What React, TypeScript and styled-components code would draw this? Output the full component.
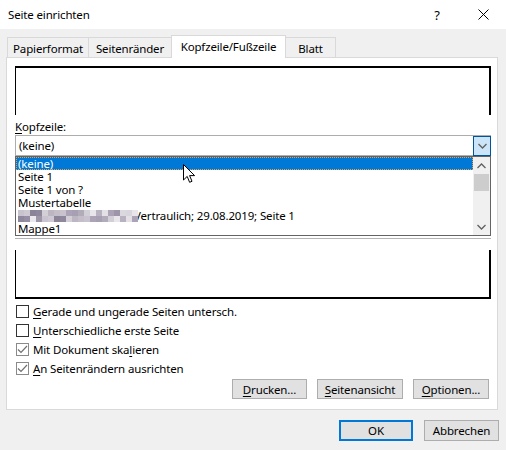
import React from "react";
import styled, { createGlobalStyle, css } from "styled-components";

const GlobalStyle = createGlobalStyle`
  html, body {
    margin: 0;
    padding: 0;
    background: #f0f0f0;
  }
  body {
    font-family: "Noto Sans", "Segoe UI", sans-serif;
    font-size: 11.5px;
    letter-spacing: -0.15px;
    color: #000;
  }
  * {
    box-sizing: border-box;
  }
`;

const Window = styled.div`
  width: 506px;
  height: 450px;
  display: flex;
  flex-direction: column;
  background: #f0f0f0;
  overflow: hidden;
`;

const TitleBar = styled.div`
  height: 29px;
  background: #fff;
  display: flex;
  align-items: center;
  padding-left: 8px;
`;

const Title = styled.span`
  flex: 1;
`;

const TitleButton = styled.div`
  width: 46px;
  height: 29px;
  display: flex;
  align-items: center;
  justify-content: center;
  font-size: 13px;
  color: #000;
`;

const Body = styled.div`
  flex: 1;
  display: flex;
  flex-direction: column;
  padding: 7px 8px 0 6px;
`;

const TabStrip = styled.div`
  display: flex;
  align-items: flex-end;
  height: 21px;
  padding-left: 2px;
  position: relative;
  z-index: 1;
`;

const Tab = styled.div<{ $active?: boolean; $width: number }>`
  width: ${(p) => p.$width}px;
  height: 20px;
  display: flex;
  align-items: center;
  justify-content: center;
  border: 1px solid #d9d9d9;
  border-bottom: none;
  background: #f0f0f0;
  margin-left: -1px;
  padding-top: 1px;
  ${(p) =>
    p.$active &&
    css`
      height: 23px;
      background: #fff;
      margin-bottom: -1px;
      padding-top: 0;
      padding-bottom: 1px;
      position: relative;
      z-index: 2;
    `}
`;

const Panel = styled.div`
  background: #fff;
  border: 1px solid #d9d9d9;
  height: 353px;
  padding: 0 6px 0 8px;
  display: flex;
  flex-direction: column;
`;

const PreviewBox = styled.div<{ $footer?: boolean }>`
  height: 49px;
  border-left: 1px solid #000;
  border-right: 2px solid #000;
  ${(p) =>
    p.$footer
      ? css`
          margin-top: 14px;
          border-bottom: 2px solid #000;
        `
      : css`
          margin-top: 8px;
          border-top: 2px solid #000;
        `}
`;

const FieldLabel = styled.div`
  margin-top: 4px;
  height: 16px;
  line-height: 16px;
`;

const AccessKey = styled.span`
  text-decoration: underline;
  text-underline-offset: 2px;
`;

const ComboWrap = styled.div`
  position: relative;
`;

const Combo = styled.div`
  height: 21px;
  border: 1px solid #adadad;
  display: flex;
  align-items: center;
  padding-left: 3px;
  position: relative;
`;

const ComboButton = styled.div`
  position: absolute;
  right: -1px;
  top: 0;
  width: 18px;
  height: 20px;
  background: #cce4f7;
  border: 1px solid #005499;
  display: flex;
  align-items: center;
  justify-content: center;
`;

const ListBox = styled.div`
  height: 80px;
  border: 1px solid #646464;
  display: flex;
  box-shadow: 0 2px 0 #fff, 0 3px 0 #b4b4b4;
`;

const ListItems = styled.div`
  flex: 1;
  display: flex;
  flex-direction: column;
  overflow: hidden;
`;

const ListRow = styled.div<{ $selected?: boolean }>`
  height: 13px;
  flex: none;
  line-height: 13px;
  padding-left: 2px;
  white-space: nowrap;
  display: flex;
  align-items: center;
  ${(p) =>
    p.$selected &&
    css`
      background: #0078d7;
      color: #fff;
      outline: 1px dotted #e8a040;
      outline-offset: -1px;
    `}
`;

const Mosaic = styled.span`
  display: inline-grid;
  grid-template-columns: repeat(20, 6px);
  grid-template-rows: 6px 6px;
  margin-right: -4px;
  position: relative;
  z-index: 1;
`;

const MosaicCell = styled.span<{ $c: string }>`
  background: ${(p) => p.$c};
`;

const ScrollBar = styled.div`
  width: 17px;
  background: #f0f0f0;
  display: flex;
  flex-direction: column;
`;

const ScrollArrow = styled.div`
  height: 17px;
  display: flex;
  align-items: center;
  justify-content: center;
`;

const ScrollTrack = styled.div`
  flex: 1;
  padding: 0 1px;
`;

const ScrollThumb = styled.div`
  height: 17px;
  background: #cdcdcd;
`;

const Cursor = styled.svg`
  position: absolute;
  left: 168px;
  top: 29px;
  z-index: 3;
`;

const Options = styled.div`
  margin-top: 3px;
  display: flex;
  flex-direction: column;
`;

const CheckRow = styled.label`
  height: 19px;
  display: flex;
  align-items: center;
  gap: 4px;
  padding-left: 1px;
`;

const CheckBox = styled.span<{ $checked?: boolean }>`
  width: 13px;
  height: 13px;
  border: 1px solid ${(p) => (p.$checked ? "#8a8a8a" : "#333")};
  background: #fff;
  display: flex;
  align-items: center;
  justify-content: center;
`;

const ButtonRow = styled.div<{ $gap: number }>`
  display: flex;
  justify-content: flex-end;
  gap: ${(p) => p.$gap}px;
`;

const PanelButtons = styled(ButtonRow)`
  margin-top: 1px;
  padding-right: 2px;
`;

const DialogButtons = styled(ButtonRow)`
  margin-top: 10px;
  margin-right: -1px;
`;

const Button = styled.div<{ $width: number; $default?: boolean; $tall?: boolean }>`
  width: ${(p) => p.$width}px;
  height: ${(p) => (p.$tall ? 21 : 20)}px;
  background: #e1e1e1;
  border: 1px solid #adadad;
  display: flex;
  align-items: center;
  justify-content: center;
  ${(p) =>
    p.$default &&
    css`
      border: 2px solid #0078d7;
    `}
`;

const mosaicColors = [
  "#c9c3cf", "#a79fb2", "#d9d5dd", "#8f879b", "#bcb6c2", "#e4e1e6",
  "#9e96a8", "#cfc9d4", "#b2abba", "#e8e6ea", "#968ea2", "#c4bec9",
  "#aca4b6", "#dcd8df", "#8b8397", "#d3cfd6", "#b8b1bf", "#ece9ee",
];

const cells = Array.from(
  { length: 40 },
  (_, i) => mosaicColors[(i * 7 + (i >> 2) * 5) % mosaicColors.length]
);

const items = ["(keine)", "Seite 1", "Seite 1 von ?", "Mustertabelle"];

const Chevron: React.FC<{ up?: boolean }> = ({ up }) => (
  <svg width="9" height="6" viewBox="0 0 9 6">
    <polyline
      points={up ? "0.5,5 4.5,1 8.5,5" : "0.5,1 4.5,5 8.5,1"}
      fill="none"
      stroke="#606060"
      strokeWidth="1.3"
    />
  </svg>
);

const Check = () => (
  <svg width="11" height="9" viewBox="0 0 11 9">
    <polyline points="1,4.5 4,7.5 10,1" fill="none" stroke="#707070" strokeWidth="1.2" />
  </svg>
);

export default function App() {
  return (
    <Window>
      <GlobalStyle />
      <TitleBar>
        <Title>Seite einrichten</Title>
        <TitleButton>?</TitleButton>
        <TitleButton>
          <svg width="11" height="11" viewBox="0 0 11 11">
            <path d="M0.5 0.5 L10.5 10.5 M10.5 0.5 L0.5 10.5" stroke="#000" strokeWidth="1" />
          </svg>
        </TitleButton>
      </TitleBar>
      <Body>
        <TabStrip>
          <Tab $width={82}>Papierformat</Tab>
          <Tab $width={84}>Seitenränder</Tab>
          <Tab $width={115} $active>
            Kopfzeile/Fußzeile
          </Tab>
          <Tab $width={51}>Blatt</Tab>
        </TabStrip>
        <Panel>
          <PreviewBox />
          <FieldLabel>
            <AccessKey>K</AccessKey>opfzeile:
          </FieldLabel>
          <ComboWrap>
            <Combo>
              (keine)
              <ComboButton>
                <Chevron />
              </ComboButton>
            </Combo>
            <ListBox>
              <ListItems>
                {items.map((t, i) => (
                  <ListRow key={t} $selected={i === 0}>
                    {t}
                  </ListRow>
                ))}
                <ListRow>
                  <Mosaic>
                    {cells.map((c, i) => (
                      <MosaicCell key={i} $c={c} />
                    ))}
                  </Mosaic>
                  Vertraulich; 29.08.2019; Seite 1
                </ListRow>
                <ListRow>Mappe1</ListRow>
              </ListItems>
              <ScrollBar>
                <ScrollArrow>
                  <Chevron up />
                </ScrollArrow>
                <ScrollTrack>
                  <ScrollThumb />
                </ScrollTrack>
                <ScrollArrow>
                  <Chevron />
                </ScrollArrow>
              </ScrollBar>
            </ListBox>
            <Cursor width="13" height="20" viewBox="0 0 13 20">
              <path
                d="M0.5 0.5 L0.5 16 L4.2 12.4 L6.6 18.3 L9 17.3 L6.6 11.6 L11.6 11.6 Z"
                fill="#fff"
                stroke="#000"
                strokeWidth="1"
                strokeLinejoin="round"
              />
            </Cursor>
          </ComboWrap>
          <PreviewBox $footer />
          <Options>
            <CheckRow>
              <CheckBox />
              <span>
                <AccessKey>G</AccessKey>erade und ungerade Seiten untersch.
              </span>
            </CheckRow>
            <CheckRow>
              <CheckBox />
              <span>
                <AccessKey>U</AccessKey>nterschiedliche erste Seite
              </span>
            </CheckRow>
            <CheckRow>
              <CheckBox $checked>
                <Check />
              </CheckBox>
              <span>
                Mit Dokument ska<AccessKey>l</AccessKey>ieren
              </span>
            </CheckRow>
            <CheckRow>
              <CheckBox $checked>
                <Check />
              </CheckBox>
              <span>
                <AccessKey>A</AccessKey>n Seitenrändern ausrichten
              </span>
            </CheckRow>
          </Options>
          <PanelButtons $gap={10}>
            <Button $width={75}>
              <span>
                <AccessKey>D</AccessKey>rucken...
              </span>
            </Button>
            <Button $width={86}>
              <span>
                <AccessKey>S</AccessKey>eitenansicht
              </span>
            </Button>
            <Button $width={76}>
              <span>
                <AccessKey>O</AccessKey>ptionen...
              </span>
            </Button>
          </PanelButtons>
        </Panel>
        <DialogButtons $gap={11}>
          <Button $width={74} $tall $default>
            OK
          </Button>
          <Button $width={75} $tall>
            Abbrechen
          </Button>
        </DialogButtons>
      </Body>
    </Window>
  );
}
